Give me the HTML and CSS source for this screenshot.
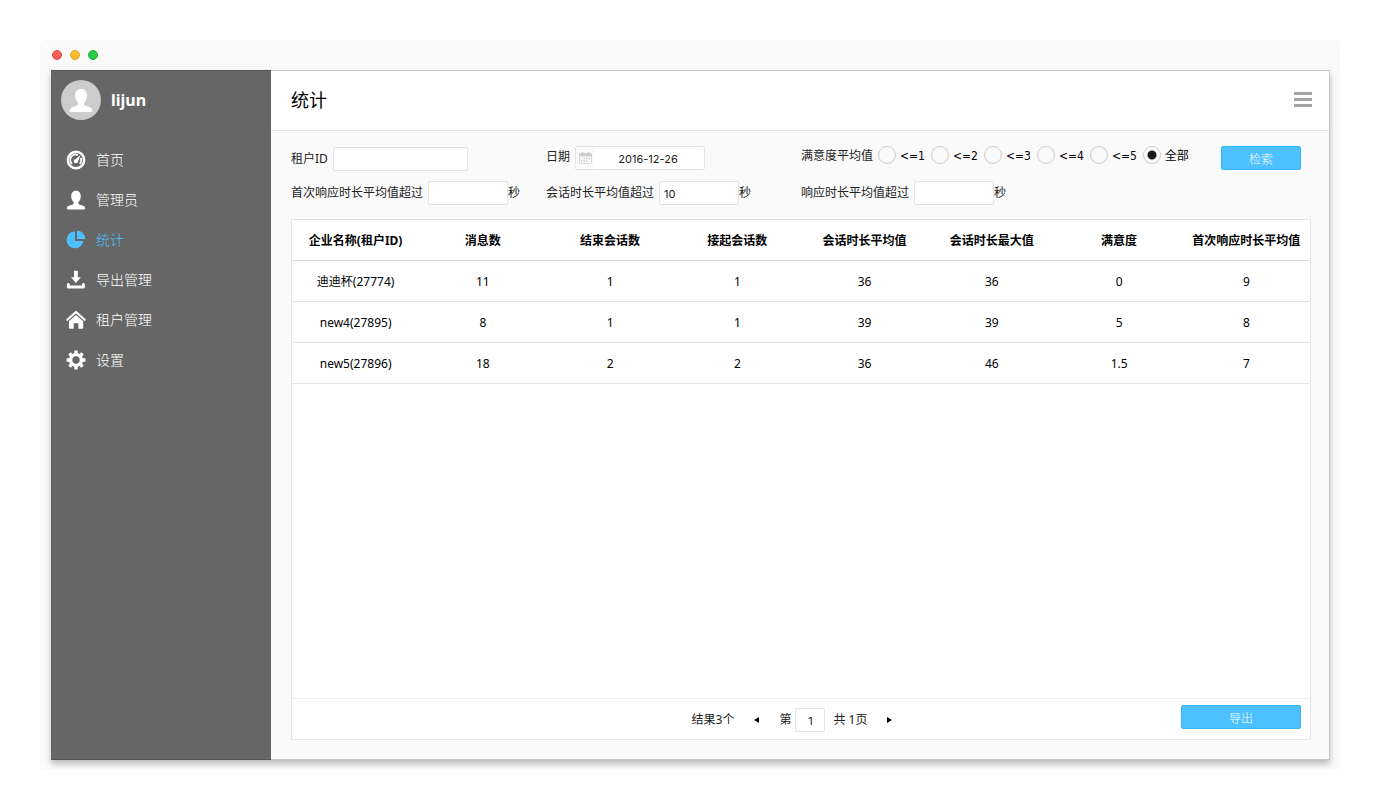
FILE: index.html
```html
<!DOCTYPE html>
<html lang="zh-CN">
<head>
<meta charset="utf-8">
<meta name="viewport" content="width=device-width, initial-scale=1">
<title>统计</title>
<link rel="stylesheet" href="styles.css">
</head>
<body>
<div class="frame">
  <div class="titlebar">
    <span class="dot dot-close"></span>
    <span class="dot dot-min"></span>
    <span class="dot dot-max"></span>
  </div>
  <div class="app">
    <aside class="sidebar">
      <div class="user">
        <svg class="avatar" viewBox="0 0 40 40" aria-hidden="true">
          <circle cx="20" cy="20" r="20" fill="#ccc"/>
          <path fill="#fff" d="M20 9c3.700 0 6 2.600 6 6.300 0 3.200-1.200 6-3 7.400v2.100c1.200 1.300 4.600 1.500 6.500 2.700 1.300.8 1.800 1.800 1.800 3.200 0 .8-.6 1.300-1.500 1.300H10.300c-.9 0-1.500-.5-1.500-1.300 0-1.400.5-2.400 1.800-3.200 1.900-1.200 5.300-1.400 6.500-2.700v-2.100c-1.900-1.400-3.100-4.200-3.100-7.400C14 11.600 16.300 9 20 9z"/>
        </svg>
        <span class="user-name">lijun</span>
      </div>
      <nav class="nav">
        <a class="nav-item" href="#">
          <svg class="nav-icon" viewBox="0 0 20 20" aria-hidden="true">
            <circle cx="10" cy="10" r="8.200" fill="none" stroke="currentColor" stroke-width="2.400"/>
            <path fill="none" stroke="currentColor" stroke-width="1.800" d="M6.100 13.800A5.300 5.300 0 0 1 12 5.100M14.800 8a5.300 5.300 0 0 1-.9 5.800"/>
            <path fill="currentColor" d="M14.600 5l-2.500 6.200a2.200 2.200 0 1 1-2.400-2.300z"/>
          </svg>首页</a>
        <a class="nav-item" href="#">
          <svg class="nav-icon" viewBox="0 0 20 20" aria-hidden="true">
            <path fill="currentColor" d="M10 .8c3 0 4.800 2.200 4.800 5.300 0 2.700-1 4.900-2.400 6v1.700c1 1.200 3.700 1.300 5.300 2.300 1.100.6 1.500 1.400 1.500 2.400 0 .6-.4.900-1.100.9H1.900c-.7 0-1.100-.3-1.100-.9 0-1 .4-1.800 1.500-2.400 1.600-1 4.300-1.100 5.300-2.300v-1.700c-1.400-1.100-2.400-3.300-2.400-6C5.200 3 7 .8 10 .8z"/>
          </svg>管理员</a>
        <a class="nav-item is-active" href="#" aria-current="page">
          <svg class="nav-icon" viewBox="0 0 20 20" aria-hidden="true">
            <path fill="currentColor" d="M9 1.500V11h8.300A8.400 8.400 0 1 1 9 1.500z"/>
            <path fill="currentColor" d="M11 .4A8.800 8.800 0 0 1 19.300 9H11z"/>
          </svg>统计</a>
        <a class="nav-item" href="#">
          <svg class="nav-icon" viewBox="0 0 20 20" aria-hidden="true">
            <path fill="currentColor" d="M8 .7h3.800v6.600h3.100L9.900 13 5 7.300h3z"/>
            <path fill="none" stroke="currentColor" stroke-width="3" stroke-linecap="round" stroke-linejoin="round" d="M2.400 14.600v2.500h15v-2.500"/>
          </svg>导出管理</a>
        <a class="nav-item" href="#">
          <svg class="nav-icon" viewBox="0 0 20 20" aria-hidden="true">
            <path fill="none" stroke="currentColor" stroke-width="2.200" stroke-linecap="round" stroke-linejoin="round" d="M1.300 9.700L10 2l8.700 7.700"/>
            <path fill="currentColor" d="M10 5l7.200 6.300v6.600c0 .5-.3.800-.8.800h-4v-5.400H7.700v5.400h-4c-.5 0-.8-.3-.8-.8v-6.600z"/>
          </svg>租户管理</a>
        <a class="nav-item" href="#">
          <svg class="nav-icon" viewBox="0 0 20 20" aria-hidden="true">
            <circle cx="10" cy="10" r="5.400" fill="none" stroke="currentColor" stroke-width="3.400"/>
            <path fill="none" stroke="currentColor" stroke-width="3.400" d="M10 .6v3.600M10 15.800v3.600M.6 10h3.600M15.800 10h3.600M3.400 3.400l2.400 2.400M14.200 14.200l2.400 2.400M16.600 3.400l-2.400 2.400M5.800 14.200l-2.400 2.400"/>
          </svg>设置</a>
      </nav>
    </aside>

    <main class="main">
      <header class="header">
        <h1 class="title">统计</h1>
        <button class="menu" type="button" aria-label="菜单"><span></span><span></span><span></span></button>
      </header>
      <div class="content">
        <form class="filters">
          <div class="field field-tenant">
            <label for="tenant">租户ID</label>
            <input class="input input-wide" id="tenant" type="text">
          </div>
          <div class="field field-date">
            <label for="date">日期</label>
            <div class="date">
              <svg class="date-icon" viewBox="0 0 18 22" aria-hidden="true">
                <path fill="#d0d0d0" d="M4 6h10.500c.8 0 1.500.6 1.500 1.400v2H3v-2C3 6.600 3.400 6 4 6z"/>
                <path fill="none" stroke="#d8d8d8" d="M3.500 9v6.500c0 .6.400 1 1 1h10c.6 0 1-.4 1-1V9"/>
                <path fill="none" stroke="#c8c8c8" stroke-width="1.500" d="M6.500 5v3M12.500 5v3"/>
                <path fill="none" stroke="#cacaca" stroke-width="1.500" stroke-dasharray="1.500 1" d="M7.500 11.500H14M5 14h6.500"/>
              </svg>
              <input class="date-input" id="date" type="text" value="2016-12-26">
            </div>
          </div>
          <fieldset class="field field-score">
            <legend class="score-label">满意度平均值</legend>
            <label class="choice"><input type="radio" name="score">&lt;=1</label>
            <label class="choice"><input type="radio" name="score">&lt;=2</label>
            <label class="choice"><input type="radio" name="score">&lt;=3</label>
            <label class="choice"><input type="radio" name="score">&lt;=4</label>
            <label class="choice"><input type="radio" name="score">&lt;=5</label>
            <label class="choice"><input type="radio" name="score" checked>全部</label>
          </fieldset>
          <button class="button button-search" type="button">检索</button>
          <div class="field">
            <label for="first">首次响应时长平均值超过</label>
            <span class="unit"><input class="input" id="first" type="text">秒</span>
          </div>
          <div class="field">
            <label for="session">会话时长平均值超过</label>
            <span class="unit"><input class="input" id="session" type="text" value="10">秒</span>
          </div>
          <div class="field">
            <label for="response">响应时长平均值超过</label>
            <span class="unit"><input class="input" id="response" type="text">秒</span>
          </div>
        </form>

        <section class="panel">
          <div class="panel-body">
            <table class="table">
              <thead>
                <tr><th>企业名称(租户ID)</th><th>消息数</th><th>结束会话数</th><th>接起会话数</th><th>会话时长平均值</th><th>会话时长最大值</th><th>满意度</th><th>首次响应时长平均值</th></tr>
              </thead>
              <tbody>
                <tr><td>迪迪杯(27774)</td><td>11</td><td>1</td><td>1</td><td>36</td><td>36</td><td>0</td><td>9</td></tr>
                <tr><td>new4(27895)</td><td>8</td><td>1</td><td>1</td><td>39</td><td>39</td><td>5</td><td>8</td></tr>
                <tr><td>new5(27896)</td><td>18</td><td>2</td><td>2</td><td>36</td><td>46</td><td>1.5</td><td>7</td></tr>
              </tbody>
            </table>
          </div>
          <footer class="pager">
            <div class="pager-nav">
              <span>结果3个</span>
              <button class="arrow" type="button" aria-label="上一页"><svg viewBox="0 0 5 6"><path d="M5 0v6L0 3z"/></svg></button>
              <div class="page">
                <label for="page">第</label>
                <input class="input input-page" id="page" type="text" value="1">
                <span class="page-total">共 1页</span>
              </div>
              <button class="arrow" type="button" aria-label="下一页"><svg viewBox="0 0 5 6"><path d="M0 0v6l5-3z"/></svg></button>
            </div>
            <button class="button button-export" type="button">导出</button>
          </footer>
        </section>
      </div>
    </main>
  </div>
</div>
</body>
</html>
```

FILE: styles.css
```css
* {
  box-sizing: border-box;
}

body {
  margin: 0;
  padding: 40px;
  min-height: 100vh;
  display: flex;
  background: #fff;
  color: #000;
  font: 12px/18px "Noto Sans", "Noto Sans CJK SC", sans-serif;
}

button,
input {
  font: inherit;
  margin: 0;
}

.frame {
  flex: 1;
  min-width: 0;
  display: flex;
  flex-direction: column;
  padding: 0 10px 10px 11px;
  background: #fafafa;
  border-radius: 5px;
  overflow: hidden;
}

.titlebar {
  display: flex;
  align-items: center;
  gap: 8px;
  height: 30px;
  padding-left: 1px;
}

.dot {
  width: 10px;
  height: 10px;
  border: 1px solid;
  border-radius: 50%;
}

.dot-close {
  background: #ff5f57;
  border-color: #e2463f;
}

.dot-min {
  background: #ffbd2e;
  border-color: #e0a028;
}

.dot-max {
  background: #28ca42;
  border-color: #1fad34;
}

.app {
  flex: 1;
  display: flex;
  box-shadow: 0 4px 6px rgba(0, 0, 0, 0.25);
}

.sidebar {
  flex: none;
  width: 220px;
  background: #666;
  border: solid #555;
  border-width: 1px 0;
  color: #fff;
}

.user {
  display: flex;
  align-items: center;
  gap: 10px;
  padding: 9px 10px 20px;
}

.avatar {
  width: 40px;
  height: 40px;
}

.user-name {
  font-size: 16px;
  font-weight: 700;
}

.nav-item {
  display: flex;
  align-items: center;
  gap: 10px;
  height: 40px;
  padding-left: 15px;
  color: #fff;
  font-size: 14px;
  font-weight: 300;
  text-decoration: none;
}

.nav-item.is-active {
  color: #4dc1ff;
}

.nav-icon {
  width: 20px;
  height: 20px;
}

.main {
  flex: 1;
  min-width: 0;
  display: flex;
  flex-direction: column;
  background: #fafafa;
  border: solid #c8c8c8;
  border-width: 1px 1px 1px 0;
}

.header {
  display: flex;
  align-items: center;
  justify-content: space-between;
  height: 60px;
  padding: 0 17px 2px 20px;
  background: #fff;
  border-bottom: 1px solid #e4e4e4;
}

.title {
  margin: 0;
  font-size: 18px;
  font-weight: 400;
}

.menu {
  display: flex;
  flex-direction: column;
  gap: 3px;
  padding: 0;
  border: 0;
  background: none;
}

.menu span {
  width: 18px;
  height: 3px;
  background: #a4a4a4;
}

.content {
  flex: 1;
  display: flex;
  flex-direction: column;
  padding: 15px 18px 19px 20px;
}

.filters {
  display: grid;
  grid-template-columns: repeat(4, 1fr);
  row-gap: 10px;
  margin-bottom: 14px;
  color: #222;
}

.field {
  display: flex;
  align-items: center;
  gap: 5px;
  min-width: 0;
  margin: 0;
  padding: 0;
  border: 0;
  white-space: nowrap;
}

.field-tenant {
  padding-top: 1px;
}

.field-date {
  align-items: flex-start;
}

.field-date label {
  line-height: 22px;
}

.field-score {
  align-items: flex-start;
  align-self: start;
  gap: 6px;
  line-height: 20px;
}

.score-label {
  float: left;
  padding: 0;
  margin-right: -1px;
}

.choice {
  display: flex;
  align-items: flex-start;
  gap: 4px;
  color: #000;
  font-family: "DejaVu Sans Condensed", "Noto Sans", "Noto Sans CJK SC", sans-serif;
}

.choice input {
  appearance: none;
  width: 18px;
  height: 18px;
  border: 1px solid #ccc;
  border-radius: 50%;
}

.choice input:checked {
  background: radial-gradient(circle, #1a1a1a 4px, transparent 5px);
}

.unit {
  display: flex;
  align-items: center;
}

.input,
.date {
  height: 24px;
  border: 1px solid #e4e4e4;
  border-radius: 2px;
  background: #fff;
}

.input,
.date-input {
  color: #222;
  font-family: Inter, sans-serif;
  font-size: 11px;
}

.input {
  width: 80px;
  padding: 1px 4px 0;
}

.input-wide {
  width: 135px;
}

.date {
  display: flex;
  width: 130px;
}

.date-icon {
  width: 18px;
  height: 22px;
  background: #fafafa;
}

.date-input {
  flex: 1;
  min-width: 0;
  padding: 2px 2px 0 0;
  border: 0;
  background: none;
  text-align: center;
}

.button {
  height: 24px;
  padding: 4px 0 0;
  border: 1px solid #36b6fb;
  border-radius: 2px;
  background: #4dc1ff;
  color: #fff;
  font-weight: 300;
}

.button-search {
  justify-self: end;
  width: 80px;
  margin-right: 10px;
}

.panel {
  flex: 1;
  display: flex;
  flex-direction: column;
  background: #fff;
  border: 1px solid #e4e4e4;
}

.panel-body {
  flex: 1;
}

.table {
  width: 100%;
  table-layout: fixed;
  border-spacing: 0;
}

.table th,
.table td {
  height: 41px;
  padding: 1px 0 0;
  border-bottom: 1px solid #e4e4e4;
  text-align: center;
  white-space: nowrap;
}

.table th {
  border-bottom-color: #d8d8d8;
}

.pager {
  display: grid;
  grid-template-columns: 1fr auto 1fr;
  height: 41px;
  padding: 0 9px;
  border-top: 1px solid #f0f0f0;
}

.pager-nav {
  grid-column: 2;
  display: flex;
  align-items: center;
  gap: 20px;
  padding: 2px 18px 0 0;
  color: #222;
}

.arrow {
  display: flex;
  padding: 0;
  border: 0;
  background: none;
}

.arrow svg {
  width: 5px;
  height: 6px;
}

.page {
  display: flex;
  align-items: center;
  gap: 4px;
}

.input-page {
  width: 30px;
  text-align: center;
}

.page-total {
  padding-left: 4px;
}

.button-export {
  justify-self: end;
  width: 120px;
  margin-top: 6px;
}
```
